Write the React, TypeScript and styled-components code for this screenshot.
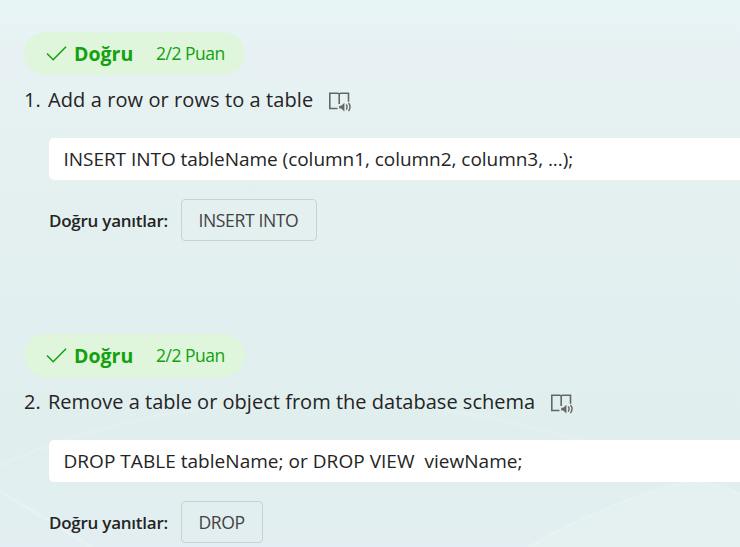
import React from "react";
import styled, { createGlobalStyle } from "styled-components";

const GlobalStyle = createGlobalStyle`
  body {
    margin: 0;
    background: #e4f0f0;
    color: #242424;
    font-family: "Open Sans", "Noto Sans", sans-serif;
  }
`;

const Page = styled.main`
  position: relative;
  box-sizing: border-box;
  height: 547px;
  padding: 32px 0 0 24px;
  overflow: hidden;
  background: linear-gradient(
    180deg,
    #e7f4f4 0,
    #e7f3f4 28px,
    #e7f1f3 50px,
    #e7f1f3 75px,
    #e6f2f2 110px,
    #e4f0f0 220px,
    #e2eff0 320px,
    #e0eeee 430px,
    #e2eff0 500px,
    #e2eef1 547px
  );
`;

const Backdrop = styled.svg`
  position: absolute;
  left: 0;
  top: 0;
`;

const Question = styled.section`
  position: relative;
  height: 302px;
`;

const ScoreBadge = styled.div`
  display: flex;
  align-items: center;
  box-sizing: border-box;
  width: 221px;
  height: 43px;
  padding-left: 22px;
  border-radius: 22px;
  background: #dff6dd;
  color: #13a10e;
  line-height: 43px;
  white-space: nowrap;
`;

const CheckGlyph = styled.svg`
  flex: none;
  margin-top: -2px;
`;

const Verdict = styled.strong`
  width: 82px;
  margin-left: 6px;
  font-size: 19.5px;
  font-weight: 700;
`;

const Points = styled.span`
  font-size: 17.5px;
  letter-spacing: -0.5px;
`;

const TitleRow = styled.div`
  display: flex;
  align-items: center;
  height: 28px;
  margin-top: 11px;
  font-size: 20px;
  line-height: 28px;
  white-space: nowrap;
`;

const Ordinal = styled.span`
  width: 24px;
`;

const Title = styled.span<{ $tracking: number }>`
  letter-spacing: ${(p) => p.$tracking}px;
`;

const ReaderButton = styled.button`
  display: flex;
  margin: 4px 0 0 15px;
  padding: 0;
  border: 0;
  background: none;
  color: #666;
`;

const Statement = styled.div<{ $tracking: number }>`
  box-sizing: border-box;
  height: 42px;
  margin: 24px 0 0 25px;
  padding-left: 14.5px;
  border-radius: 5px 0 0 5px;
  background: #fff;
  font-size: 19px;
  letter-spacing: ${(p) => p.$tracking}px;
  line-height: 42px;
  white-space: pre;
`;

const AnswerRow = styled.div`
  display: flex;
  align-items: center;
  margin: 19px 0 0 25px;
`;

const AnswerLabel = styled.span`
  width: 132px;
  font-size: 17px;
  font-weight: 600;
  letter-spacing: -0.25px;
  white-space: nowrap;
`;

const Answer = styled.span<{ $width: number }>`
  box-sizing: border-box;
  width: ${(p) => p.$width}px;
  height: 42px;
  padding-left: 16.5px;
  border: 1px solid #cfcfd0;
  border-radius: 4px;
  color: #424242;
  font-size: 17.6px;
  letter-spacing: -0.4px;
  line-height: 41px;
  white-space: nowrap;
`;

const CheckIcon = () => (
  <CheckGlyph width="22" height="22" viewBox="0 0 22 22" fill="none" stroke="currentColor" strokeWidth="1.5">
    <path d="M1 11.5 7.2 17.7 20 4.7" />
  </CheckGlyph>
);

const ReaderIcon = () => (
  <svg width="24" height="22" viewBox="0 0 24 22" fill="none" stroke="currentColor" strokeWidth="1.6">
    <path d="M9.5 17.5H1.8V2.2h7.8c1 0 1.6.5 1.6 1.4V13M11.2 3.6c0-.9.6-1.4 1.6-1.4h7.7v8.6" />
    <path d="M11.2 14.7h2l3.2-2.9v8.6l-3.2-2.9h-2z" fill="currentColor" stroke="none" />
    <path d="M18.2 13.5c1.1 1.6 1.1 3.6 0 5.2M20.5 12c1.9 2.5 1.9 5.7 0 8.2" strokeWidth="1.4" />
  </svg>
);

const questions = [
  {
    title: "Add a row or rows to a table",
    titleTracking: 0.09,
    statement: "INSERT INTO tableName (column1, column2, column3, ...);",
    statementTracking: -0.04,
    answer: "INSERT INTO",
    answerWidth: 136,
  },
  {
    title: "Remove a table or object from the database schema",
    titleTracking: 0.02,
    statement: "DROP TABLE tableName; or DROP VIEW  viewName;",
    statementTracking: 0.035,
    answer: "DROP",
    answerWidth: 82,
  },
];

export default function App() {
  return (
    <>
      <GlobalStyle />
      <Page>
        <Backdrop width="740" height="547" viewBox="0 0 740 547" fill="none" stroke="#e8f3f3" strokeWidth="3">
          <path d="M527 547Q610 500 690 483Q720 484 740 494V547Z" fill="#e5f1f1" stroke="none" />
          <path d="M-5 468Q120 408 300 400Q440 398 590 443" strokeOpacity="0.55" />
          <path d="M-5 489Q50 520 95 550" strokeOpacity="0.7" />
          <path d="M525 549Q610 500 690 481Q720 484 745 496" strokeWidth="2" strokeOpacity="0.7" />
        </Backdrop>
        {questions.map((q, i) => (
          <Question key={q.title}>
            <ScoreBadge>
              <CheckIcon />
              <Verdict>Doğru</Verdict>
              <Points>2/2 Puan</Points>
            </ScoreBadge>
            <TitleRow>
              <Ordinal>{i + 1}.</Ordinal>
              <Title $tracking={q.titleTracking}>{q.title}</Title>
              <ReaderButton aria-label="Immersive Reader">
                <ReaderIcon />
              </ReaderButton>
            </TitleRow>
            <Statement $tracking={q.statementTracking}>{q.statement}</Statement>
            <AnswerRow>
              <AnswerLabel>Doğru yanıtlar:</AnswerLabel>
              <Answer $width={q.answerWidth}>{q.answer}</Answer>
            </AnswerRow>
          </Question>
        ))}
      </Page>
    </>
  );
}
